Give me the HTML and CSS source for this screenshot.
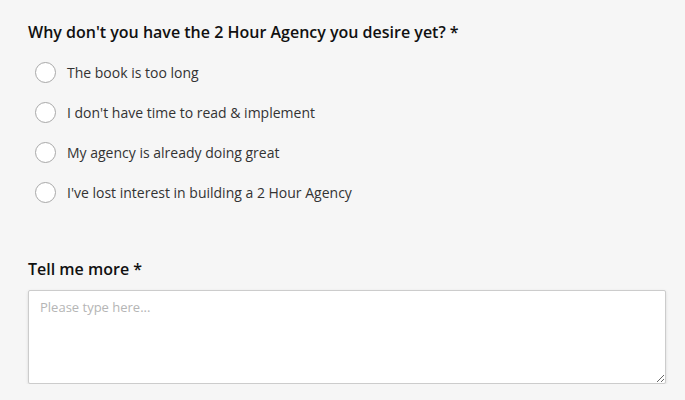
FILE: index.html
```html
<!DOCTYPE html>
<html>
<head>
<meta charset="utf-8">
<link rel="stylesheet" href="styles.css">
</head>
<body>
<form class="form">
  <fieldset class="question">
    <legend class="label">Why don't you have the 2 Hour Agency you desire yet? *</legend>
    <div class="options">
      <label class="option"><input type="radio" name="why"><span class="radio"></span><span>The book is too long</span></label>
      <label class="option"><input type="radio" name="why"><span class="radio"></span><span>I don't have time to read &amp; implement</span></label>
      <label class="option"><input type="radio" name="why"><span class="radio"></span><span>My agency is already doing great</span></label>
      <label class="option"><input type="radio" name="why"><span class="radio"></span><span>I've lost interest in building a 2 Hour Agency</span></label>
    </div>
  </fieldset>
  <div class="question more">
    <label class="label" for="more">Tell me more *</label>
    <textarea id="more" class="textarea" placeholder="Please type here..."></textarea>
  </div>
</form>
</body>
</html>
```
FILE: styles.css
```css
html, body {
  margin: 0;
  padding: 0;
  background: #f6f6f6;
}
body {
  font-family: "Open Sans", "Liberation Sans", sans-serif;
  color: #111;
}
.form {
  padding: 20px 19px 0 28px;
}
.question {
  border: 0;
  margin: 0;
  padding: 0;
}
.label {
  display: block;
  padding: 0;
  font-size: 16px;
  font-weight: 600;
  line-height: 24px;
  color: #111;
}
.options {
  display: flex;
  flex-direction: column;
  margin-top: 8px;
  padding-left: 7px;
}
.option {
  display: flex;
  align-items: center;
  height: 40px;
  font-size: 14px;
  color: #333;
}
.option input {
  display: none;
}
.radio {
  box-sizing: border-box;
  width: 21px;
  height: 21px;
  border: 1px solid #a8a8a8;
  border-radius: 50%;
  background: #fff;
  margin-right: 11px;
  flex: none;
}
.more {
  margin-top: 45px;
}
.more .label {
  margin-bottom: 9px;
}
.textarea {
  display: block;
  box-sizing: border-box;
  width: 638px;
  height: 94px;
  border: 1px solid #cccccc;
  border-radius: 2px;
  background: #fff;
  box-shadow: 0 1px 3px rgba(0,0,0,0.12);
  padding: 7px 11px;
  font-family: "Open Sans", "Liberation Sans", sans-serif;
  font-size: 13px;
  color: #333;
  resize: vertical;
}
.textarea::placeholder {
  color: #b5b5b5;
}
```
